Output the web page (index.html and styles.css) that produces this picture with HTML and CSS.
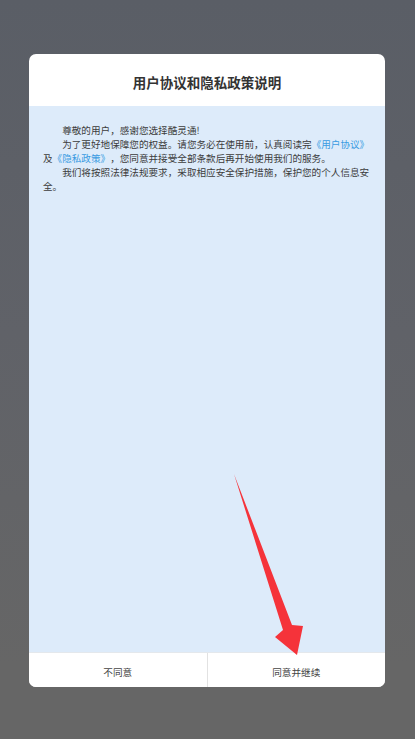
FILE: index.html
```html
<!DOCTYPE html>
<html lang="zh-CN">
<head>
    <meta charset="UTF-8">
    <meta name="viewport" content="width=device-width, initial-scale=1.0">
    <title>用户协议和隐私政策说明</title>
    <link rel="stylesheet" href="styles.css">
</head>
<body>
    <div class="dialog">
        <div class="dialog-header">
            <h1>用户协议和隐私政策说明</h1>
        </div>
        <div class="dialog-body">
            <p>尊敬的用户，感谢您选择酷灵通!</p>
            <p>为了更好地保障您的权益。请您务必在使用前，认真阅读完<a href="#">《用户协议》</a>及<a href="#">《隐私政策》</a>，您同意并接受全部条款后再开始使用我们的服务。</p>
            <p>我们将按照法律法规要求，采取相应安全保护措施，保护您的个人信息安全。</p>
        </div>
        <div class="dialog-footer">
            <button class="btn">不同意</button>
            <button class="btn">同意并继续</button>
        </div>
    </div>

    <svg class="arrow" width="415" height="739" viewBox="0 0 415 739">
        <polygon points="234,474 292,625 303,626 297,655 275,637 283,630" fill="#f5333a"/>
    </svg>
</body>
</html>
```

FILE: styles.css
```css
html, body {
    height: 100%;
}
body {
    margin: 0;
    font-family: "Noto Sans CJK SC", "Noto Sans", sans-serif;
    background: linear-gradient(180deg, #5a5e66 0%, #606268 45%, #666666 90%);
    color: #333;
    position: relative;
    overflow: hidden;
}
.dialog {
    width: 356px;
    margin: 54px 0 0 29px;
    background: #fff;
    border-radius: 7px;
    overflow: hidden;
    display: flex;
    flex-direction: column;
}
.dialog-header {
    height: 52px;
    display: flex;
    align-items: center;
    justify-content: center;
    padding-top: 4px;
    box-sizing: border-box;
}
.dialog-header h1 {
    margin: 0;
    font-size: 13.5px;
    font-weight: bold;
    color: #333;
}
.dialog-body {
    height: 546px;
    box-sizing: border-box;
    background: #ddebfa;
    padding: 17px 14px;
    font-size: 9.6px;
    line-height: 14px;
    color: #3c3c3c;
    text-spacing-trim: space-all;
}
.dialog-body p {
    margin: 0;
    text-indent: 2em;
}
.dialog-body a {
    color: #3a9be2;
    text-decoration: none;
}
.dialog-footer {
    height: 35px;
    display: flex;
    border-top: 1px solid #e4e8ec;
    box-sizing: border-box;
}
.btn {
    flex: 1;
    border: none;
    background: #fff;
    font-family: inherit;
    font-size: 9.6px;
    color: #444;
    padding: 3px 0 0;
}
.btn + .btn {
    border-left: 1px solid #e2e2e2;
}
.arrow {
    position: absolute;
    left: 0;
    top: 0;
}
```
